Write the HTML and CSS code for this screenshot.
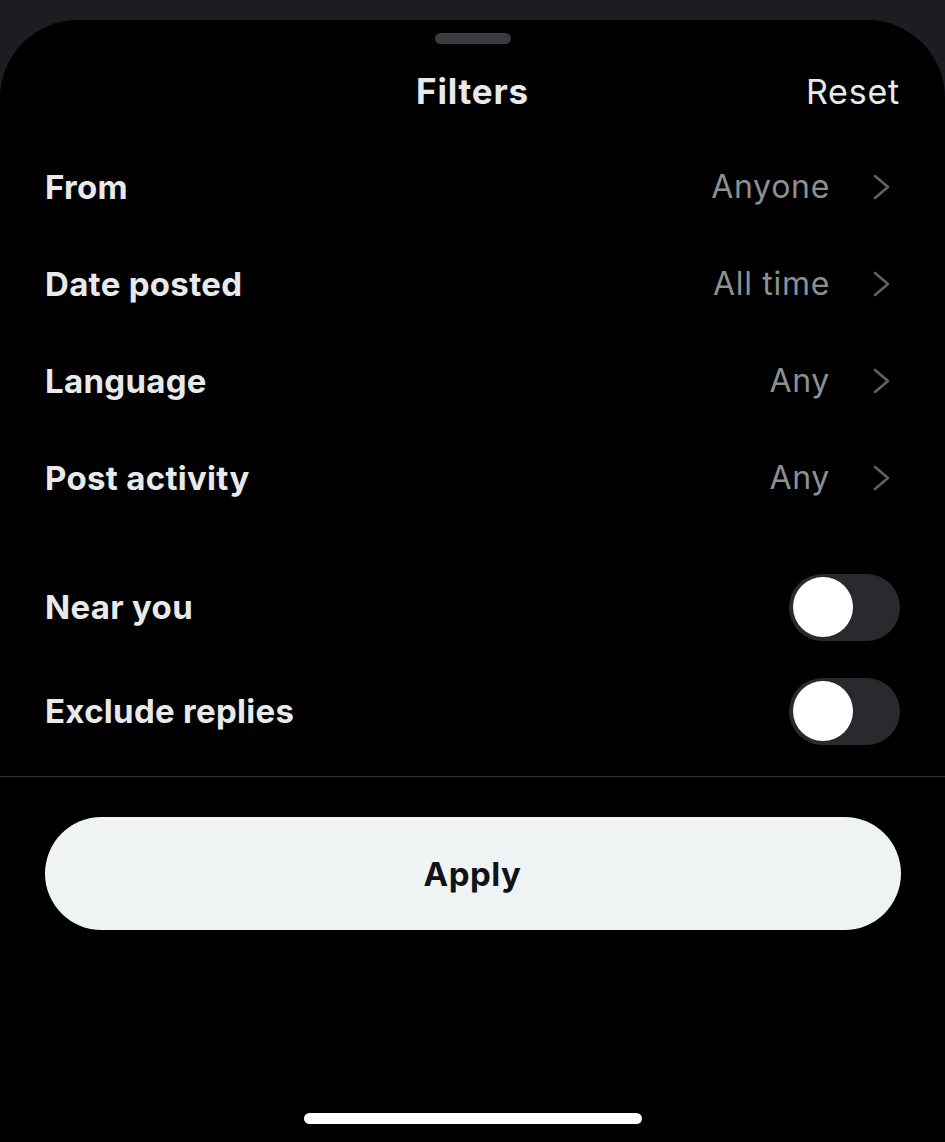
FILE: index.html
```html
<!DOCTYPE html>
<html>

<head>
    <meta charset="UTF-8" />
    <meta name="viewport" content="width=device-width, initial-scale=1">
    <title>Filters</title>
    <link rel="stylesheet" href="styles.css">
</head>

<body>
    <div class="sheet">
        <div class="grabber"></div>
        <div class="header">
            <span class="title">Filters</span>
            <span class="reset">Reset</span>
        </div>

        <div class="options">
            <div class="row">
                <span class="label">From</span>
                <span class="value">Anyone</span>
                <svg class="chevron" viewBox="0 0 17 26"><path d="M2 2 L15 13 L2 24" /></svg>
            </div>
            <div class="row">
                <span class="label">Date posted</span>
                <span class="value">All time</span>
                <svg class="chevron" viewBox="0 0 17 26"><path d="M2 2 L15 13 L2 24" /></svg>
            </div>
            <div class="row">
                <span class="label">Language</span>
                <span class="value">Any</span>
                <svg class="chevron" viewBox="0 0 17 26"><path d="M2 2 L15 13 L2 24" /></svg>
            </div>
            <div class="row">
                <span class="label">Post activity</span>
                <span class="value">Any</span>
                <svg class="chevron" viewBox="0 0 17 26"><path d="M2 2 L15 13 L2 24" /></svg>
            </div>
        </div>

        <div class="switches">
            <div class="switch-row">
                <span class="label">Near you</span>
                <span class="toggle"><span class="knob"></span></span>
            </div>
            <div class="switch-row">
                <span class="label">Exclude replies</span>
                <span class="toggle"><span class="knob"></span></span>
            </div>
        </div>

        <div class="divider"></div>

        <button class="apply">Apply</button>

        <div class="home-bar"></div>
    </div>
</body>

</html>
```

FILE: styles.css
```css
body {
    margin: 0;
    background-color: #1c1d21;
    font-family: Inter, "Liberation Sans", sans-serif;
    color: #e7e9ea;
}

.sheet {
    margin-top: 20px;
    height: 1122px;
    background-color: #000000;
    border-radius: 78px 78px 0 0;
    display: flex;
    flex-direction: column;
    align-items: center;
    overflow: hidden;
}

.grabber {
    margin-top: 13px;
    width: 76px;
    height: 11px;
    border-radius: 6px;
    background-color: #3a3b3f;
}

.header {
    margin-top: 17px;
    height: 60px;
    width: 100%;
    box-sizing: border-box;
    padding: 0 45px;
    display: flex;
    align-items: center;
    justify-content: center;
    position: relative;
}

.title {
    font-size: 35px;
    font-weight: 700;
    letter-spacing: 0.8px;
}

.reset {
    position: absolute;
    right: 45px;
    font-size: 34px;
    font-weight: 400;
    letter-spacing: 0.8px;
}

.options {
    margin-top: 17px;
    width: 100%;
    box-sizing: border-box;
    padding: 0 45px;
}

.row {
    height: 97px;
    display: flex;
    align-items: center;
}

.label {
    font-size: 33px;
    font-weight: 700;
    letter-spacing: 0.3px;
    flex: 1;
}

.value {
    font-size: 32px;
    color: #8b9095;
    letter-spacing: 0.7px;
}

.chevron {
    width: 17px;
    height: 26px;
    margin-left: 43px;
    margin-right: 10px;
    fill: none;
    stroke: #5e6266;
    stroke-width: 2.6;
    stroke-linecap: round;
    stroke-linejoin: round;
}

.switches {
    margin-top: 29px;
    width: 100%;
    box-sizing: border-box;
    padding: 0 45px;
}

.switch-row {
    height: 104px;
    display: flex;
    align-items: center;
}

.toggle {
    width: 111px;
    height: 67px;
    border-radius: 34px;
    background-color: #2a2a2e;
    box-sizing: border-box;
    padding: 4px;
    display: flex;
    align-items: center;
}

.knob {
    width: 60px;
    height: 60px;
    border-radius: 50%;
    background-color: #ffffff;
}

.divider {
    margin-top: 13px;
    width: 100%;
    height: 1px;
    background-color: #2f3336;
}

.apply {
    margin-top: 40px;
    width: 856px;
    height: 113px;
    border: none;
    border-radius: 57px;
    background-color: #eff3f4;
    color: #0f1419;
    font-family: Inter, "Liberation Sans", sans-serif;
    font-size: 33px;
    font-weight: 700;
    letter-spacing: 0.5px;
}

.home-bar {
    margin-top: 183px;
    width: 338px;
    height: 11px;
    border-radius: 6px;
    background-color: #ffffff;
}
```
